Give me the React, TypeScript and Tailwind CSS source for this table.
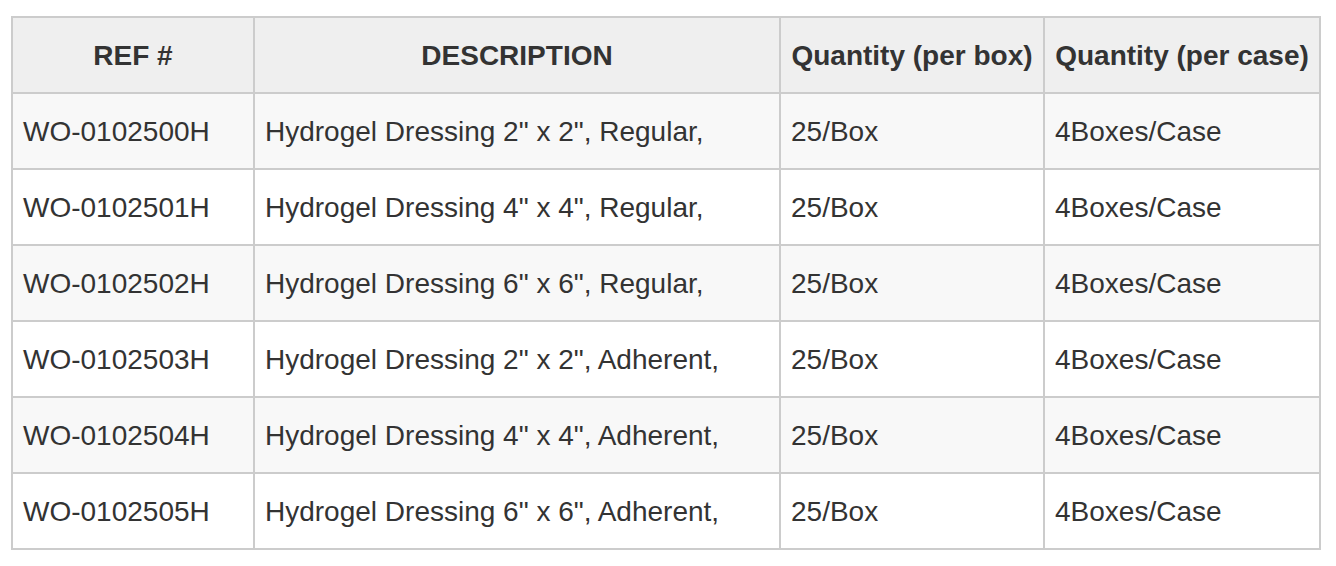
import React from "react";

const rows = [
  ["WO-0102500H", 'Hydrogel Dressing 2" x 2", Regular,'],
  ["WO-0102501H", 'Hydrogel Dressing 4" x 4", Regular,'],
  ["WO-0102502H", 'Hydrogel Dressing 6" x 6", Regular,'],
  ["WO-0102503H", 'Hydrogel Dressing 2" x 2", Adherent,'],
  ["WO-0102504H", 'Hydrogel Dressing 4" x 4", Adherent,'],
  ["WO-0102505H", 'Hydrogel Dressing 6" x 6", Adherent,'],
];

const headers = ["REF #", "DESCRIPTION", "Quantity (per box)", "Quantity (per case)"];

export default function App() {
  return (
    <div className="min-h-[566px] w-[1336px] bg-white pl-[11px] pt-[16px]" style={{ fontFamily: '"Liberation Sans", Arial, sans-serif' }}>
      <div className="grid w-[1310px] grid-cols-[240px_524px_262px_274px] auto-rows-[74px] gap-[2px] bg-[#cccccc] p-[2px] text-[28px] text-[#333333]">
        {headers.map((h) => (
          <div key={h} className="flex items-center justify-center whitespace-nowrap bg-[#efefef] px-[10px] pt-[2px] font-bold">
            {h}
          </div>
        ))}
        {rows.map((r, i) => {
          const bg = i % 2 === 0 ? "bg-[#f8f8f8]" : "bg-white";
          return (
            <React.Fragment key={r[0]}>
              <div className={`flex items-center whitespace-nowrap px-[10px] pt-[2px] ${bg}`}>{r[0]}</div>
              <div className={`flex items-center whitespace-nowrap px-[10px] pt-[2px] ${bg}`}>{r[1]}</div>
              <div className={`flex items-center whitespace-nowrap px-[10px] pt-[2px] ${bg}`}>25/Box</div>
              <div className={`flex items-center whitespace-nowrap px-[10px] pt-[2px] ${bg}`}>4Boxes/Case</div>
            </React.Fragment>
          );
        })}
      </div>
    </div>
  );
}
